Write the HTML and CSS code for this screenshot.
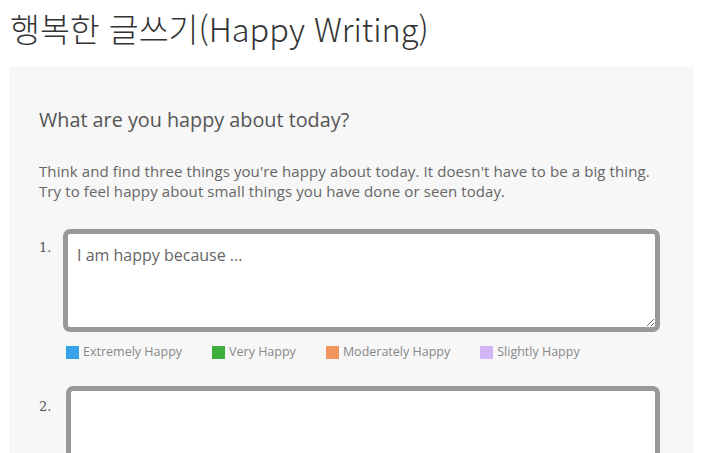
FILE: index.html
```html
<!DOCTYPE html>
<html lang="ko">
  <head>
    <meta charset="UTF-8" />
    <title>행복한 글쓰기</title>
    <link rel="stylesheet" href="styles.css">
  </head>
  <body>
    <h1 id="title">행복한 글쓰기(Happy Writing)</h1>

    <!-- writing panel -->
    <section class="panel">
      <h2>What are you happy about today?</h2>
      <p class="intro">
        Think and find three things you're happy about today. It doesn't have to be a big thing.<br>
        Try to feel happy about small things you have done or seen today.
      </p>

      <div class="entry">
        <span class="num">1.</span>
        <div class="entry-body">
          <textarea class="happy-box" placeholder="I am happy because ..."></textarea>
          <ul class="legend">
            <li><span class="swatch extreme"></span>Extremely Happy</li>
            <li><span class="swatch very"></span>Very Happy</li>
            <li><span class="swatch moderate"></span>Moderately Happy</li>
            <li><span class="swatch slight"></span>Slightly Happy</li>
          </ul>
        </div>
      </div>

      <div class="entry">
        <span class="num second">2.</span>
        <div class="entry-body">
          <textarea class="happy-box"></textarea>
        </div>
      </div>
    </section>
  </body>
</html>
```

FILE: styles.css
```css
body {
  margin: 0;
  padding: 0 10px 0 9px;
  font-family: "Open Sans", "Noto Sans CJK KR", sans-serif;
  background: #fff;
  color: #555;
  overflow: hidden;
}

#title {
  margin: 0;
  padding: 7px 0 0 1px;
  height: 67px;
  box-sizing: border-box;
  font-family: "Noto Sans CJK KR", sans-serif;
  font-weight: 300;
  font-size: 32.5px;
  line-height: 42px;
  color: #333;
}

.panel {
  background: #f7f7f7;
  padding: 40px 34px 0 30px;
  height: 500px;
}

.panel h2 {
  margin: 0;
  font-weight: 400;
  font-size: 19.8px;
  line-height: 26px;
  color: #555;
}

.intro {
  margin: 28px 0 0;
  font-size: 15px;
  letter-spacing: 0.1px;
  line-height: 20px;
  color: #666;
}

.entry {
  display: flex;
  align-items: flex-start;
  margin-top: 28px;
}

.entry + .entry {
  margin-top: 26px;
}

.num {
  width: 24px;
  padding-top: 11px;
  font-family: "DejaVu Serif", serif;
  font-size: 13px;
  color: #555;
}

.num.second {
  width: 27px;
  padding-top: 13px;
}

.entry-body {
  flex: 1;
}

.happy-box {
  display: block;
  width: 100%;
  height: 103px;
  box-sizing: border-box;
  border: 5px solid #999;
  border-radius: 7px;
  padding: 10px 9px;
  font-family: "Open Sans", sans-serif;
  font-size: 16px;
  color: #555;
  background: #fff;
  resize: vertical;
}

.happy-box::placeholder {
  color: #666;
}

.legend {
  list-style: none;
  margin: 0;
  padding: 12px 0 0 3px;
  display: flex;
  gap: 30px;
  font-size: 12.5px;
  line-height: 16px;
  color: #888;
}

.legend li {
  display: flex;
  align-items: center;
}

.swatch {
  width: 13px;
  height: 13px;
  margin-right: 4px;
}

.swatch.extreme { background: #35a3e5; }
.swatch.very { background: #3daf3d; }
.swatch.moderate { background: #f2945f; }
.swatch.slight { background: #d2b5f7; }
```
